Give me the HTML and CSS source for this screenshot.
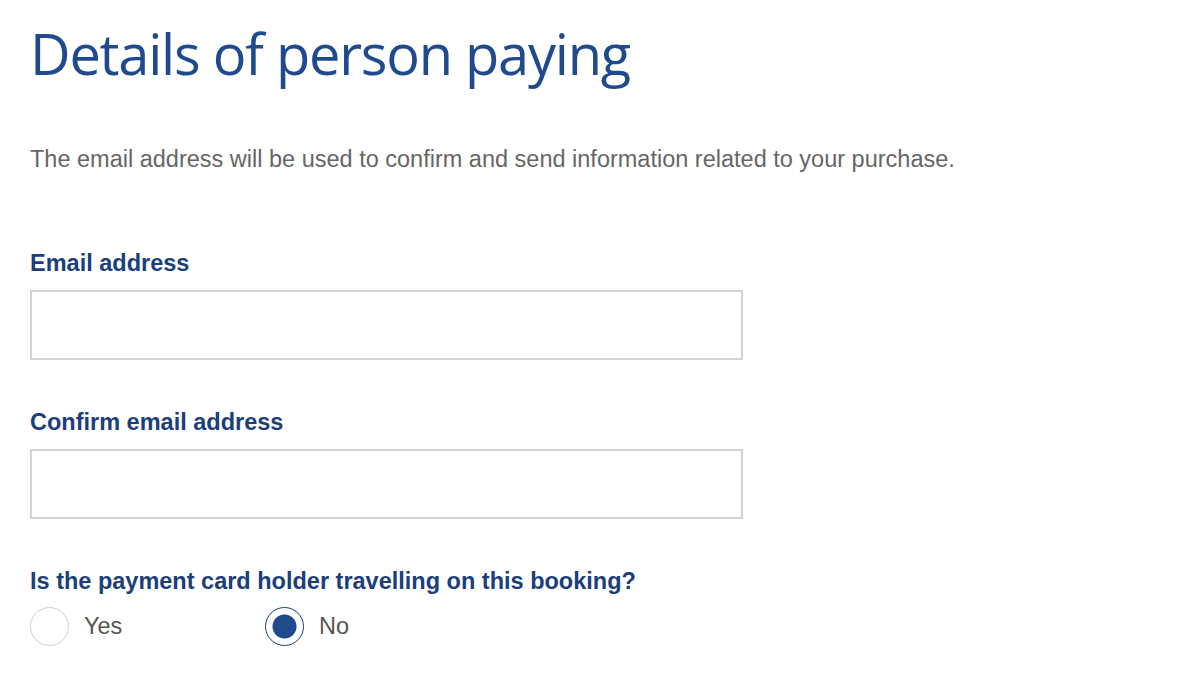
FILE: index.html
```html
<!DOCTYPE html>
<html lang="en">
<head>
    <meta charset="UTF-8">
    <meta name="viewport" content="width=device-width, initial-scale=1.0">
    <link rel="stylesheet" href="styles.css">
</head>
<body>

<div class="page">
    <h1 class="title">Details of person paying</h1>

    <p class="intro">The email address will be used to confirm and send information related to your purchase.</p>

    <!-- Email fields -->
    <div class="field first">
        <label class="fieldLabel" for="email">Email address</label>
        <input class="textInput" type="email" id="email" name="email">
    </div>

    <div class="field">
        <label class="fieldLabel" for="confirmEmail">Confirm email address</label>
        <input class="textInput" type="email" id="confirmEmail" name="confirmEmail">
    </div>

    <!-- Card holder question -->
    <div class="question">
        <div class="fieldLabel">Is the payment card holder travelling on this booking?</div>
        <div class="radioRow">
            <label class="radioOption">
                <span class="radioCircle"></span>
                <span class="radioText">Yes</span>
            </label>
            <label class="radioOption">
                <span class="radioCircle checked"></span>
                <span class="radioText">No</span>
            </label>
        </div>
    </div>
</div>

</body>
</html>
```

FILE: styles.css
```css
body {
    margin: 0;
    background: #fff;
    font-family: "Liberation Sans", Arial, sans-serif;
}

.page {
    padding: 18px 30px 0 30px;
}

.title {
    font-family: "Open Sans", sans-serif;
    font-weight: 400;
    font-size: 56px;
    line-height: 70px;
    color: #1f4a8e;
    margin: 0;
    letter-spacing: -1.25px;
}

.intro {
    font-size: 23.5px;
    color: #666;
    margin: 57px 0 0 0;
    line-height: 28px;
}

.field {
    margin-top: 48px;
}

.field.first {
    margin-top: 76px;
}

.fieldLabel {
    display: block;
    font-size: 23.5px;
    font-weight: bold;
    color: #1b3e7d;
    line-height: 28px;
}

.textInput {
    display: block;
    box-sizing: border-box;
    width: 713px;
    height: 70px;
    margin-top: 13px;
    border: 2px solid #d3d3d3;
    border-radius: 0;
    font-size: 20px;
    padding: 0 14px;
}

.question {
    margin-top: 48px;
}

.radioRow {
    display: flex;
    margin-top: 12px;
}

.radioOption {
    display: flex;
    align-items: center;
    width: 235px;
}

.radioCircle {
    box-sizing: border-box;
    width: 39px;
    height: 39px;
    border: 1.5px solid #cfcfcf;
    border-radius: 50%;
    margin-right: 15px;
    background: #fff;
}

.radioCircle.checked {
    border: 1.5px solid #1b3e7d;
    background: radial-gradient(circle, #1f4a8e 0, #1f4a8e 11.5px, #fff 12.5px);
}

.radioText {
    font-size: 23.5px;
    color: #555;
}
```
